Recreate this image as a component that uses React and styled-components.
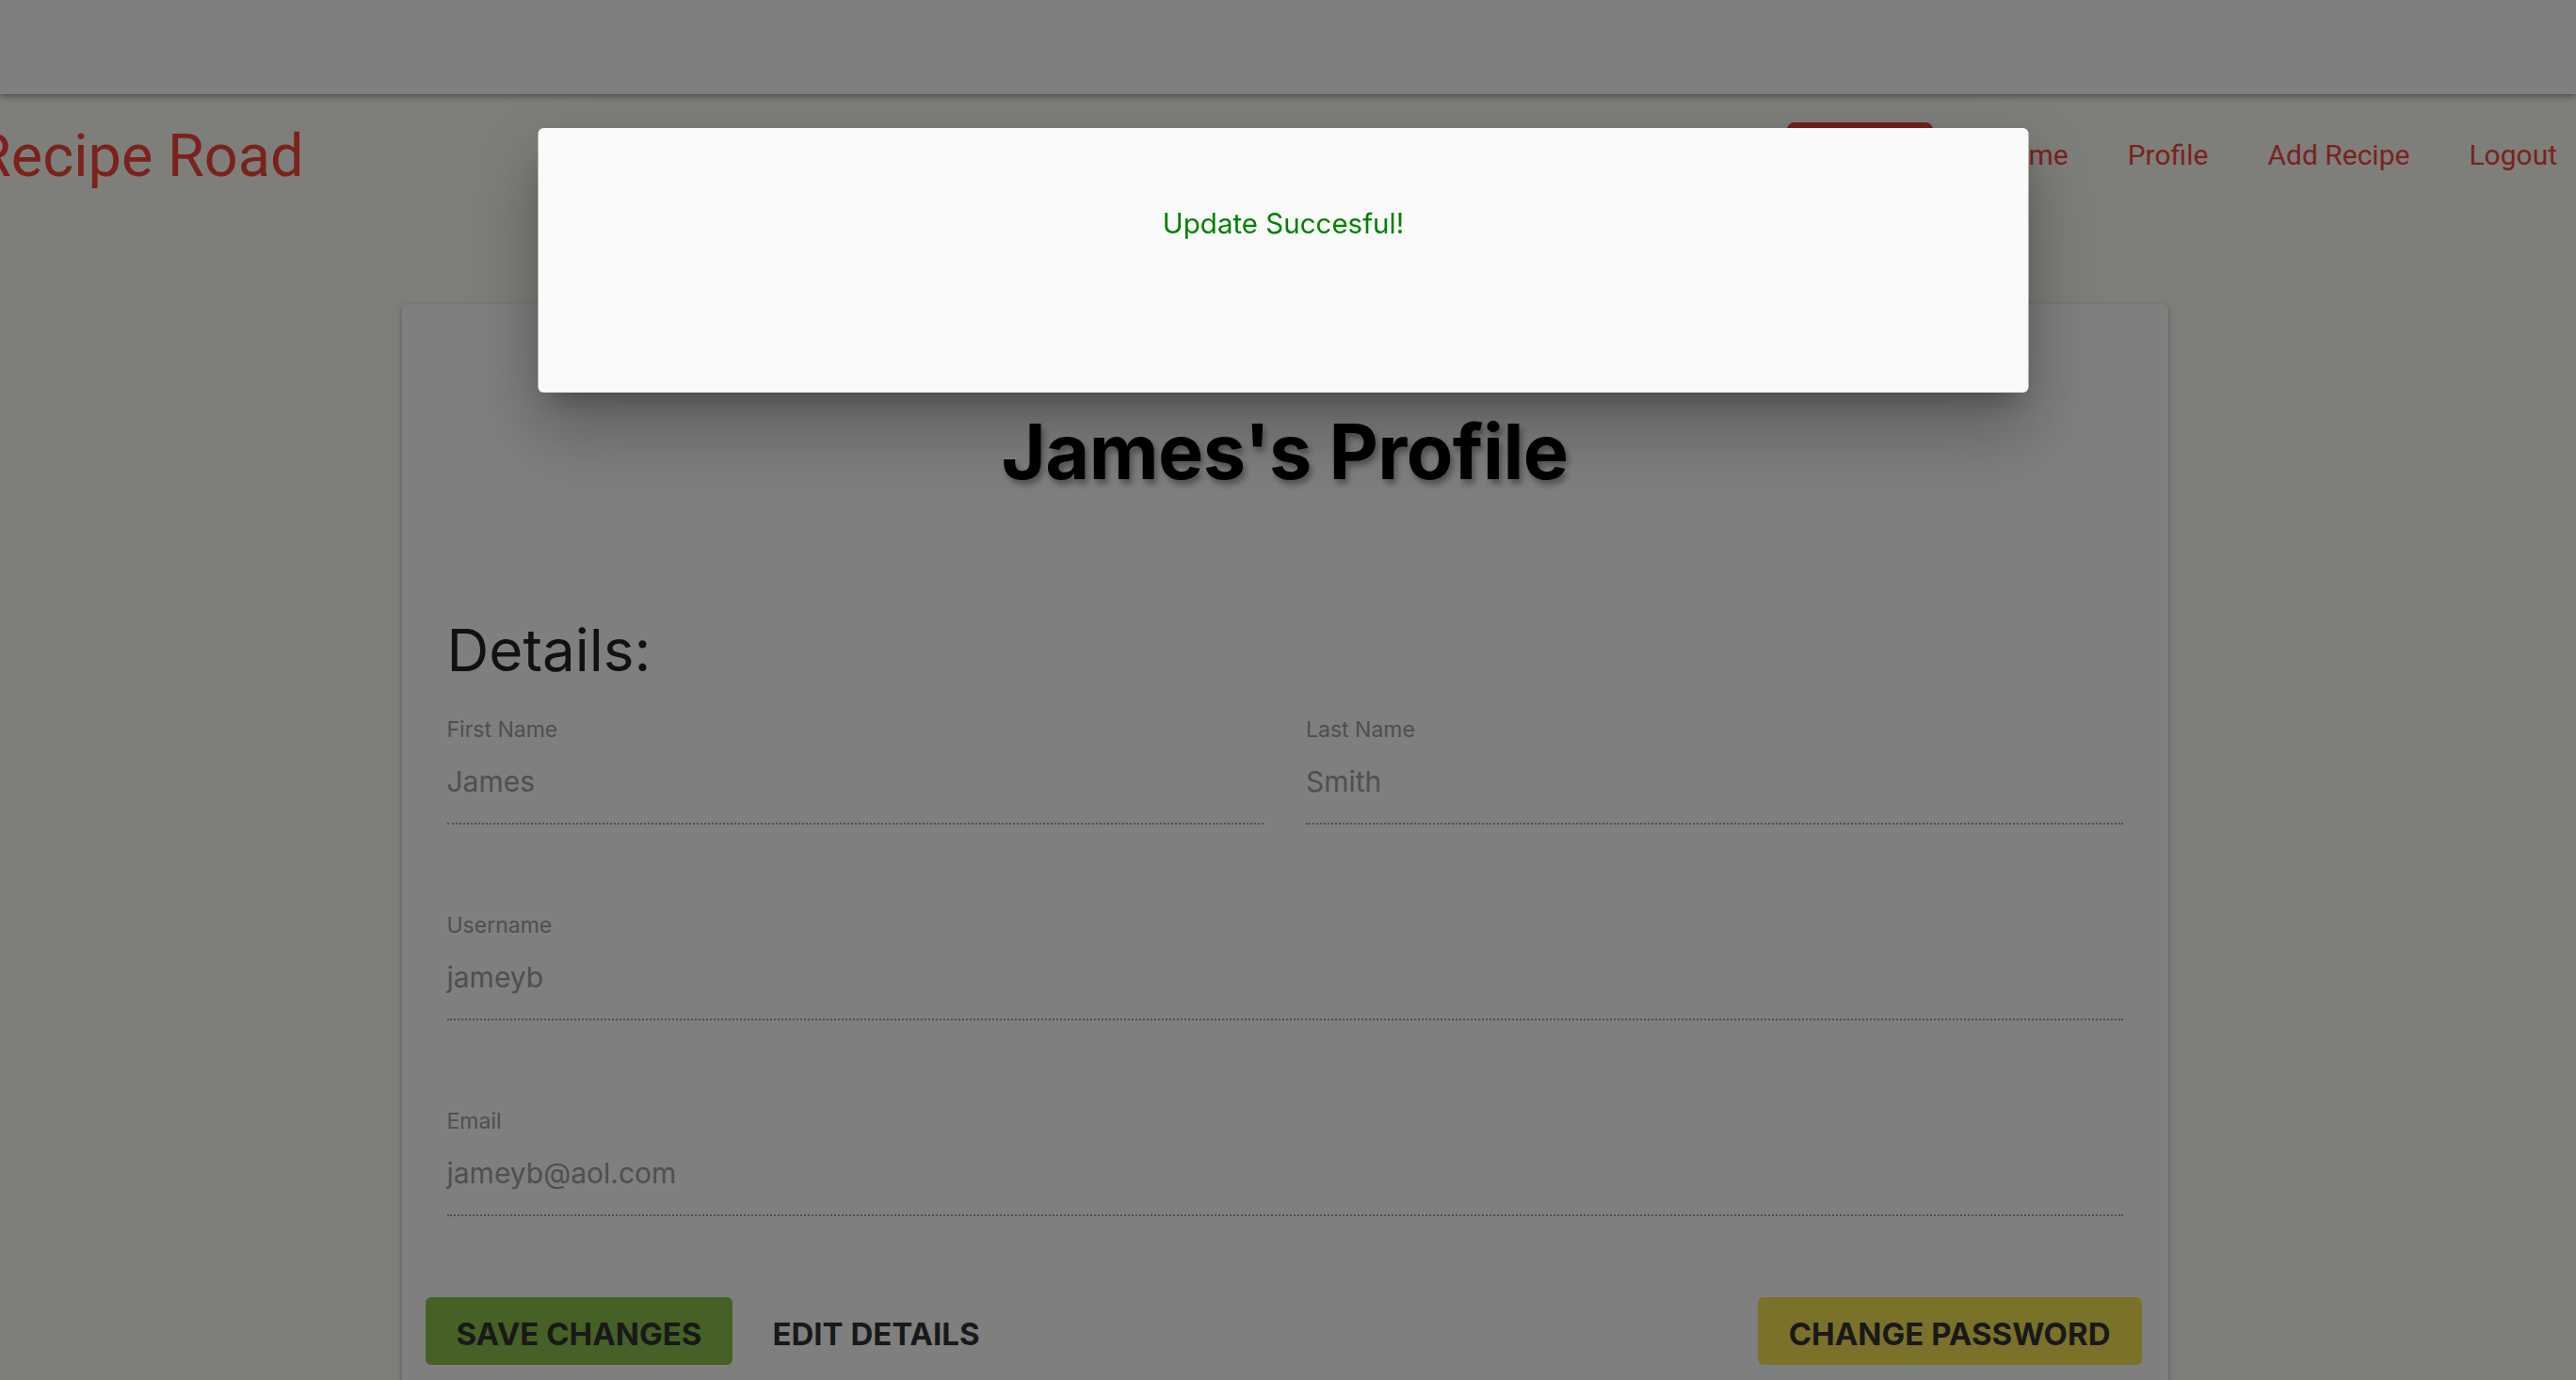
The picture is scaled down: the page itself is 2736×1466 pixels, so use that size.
import React from "react";
import styled, { createGlobalStyle } from "styled-components";

const GlobalStyle = createGlobalStyle`
    html, body {
        margin: 0;
        padding: 0;
        background-color: #fdfef4;
        overflow: hidden;
    }
    * {
        box-sizing: border-box;
    }
`;

const fields = [
    [
        { label: "First Name", value: "James" },
        { label: "Last Name", value: "Smith" },
    ],
    [{ label: "Username", value: "jameyb" }],
    [{ label: "Email", value: "jameyb@aol.com" }],
];

const navLinks = ["Home", "Profile", "Add Recipe", "Logout"];

const Field = ({ label, value }) => (
    <FieldBox>
        <FieldLabel>{label}</FieldLabel>
        <FieldValue>{value}</FieldValue>
    </FieldBox>
);

const App = () => {
    return (
        <>
            <GlobalStyle />
            <Page>
                <TopBar />
                <Header>
                    <Brand>Recipe Road</Brand>
                    <Nav>
                        <SearchPill aria-hidden="true" />
                        {navLinks.map((link) => (
                            <NavLink key={link}>{link}</NavLink>
                        ))}
                    </Nav>
                </Header>

                <Main>
                    <Card>
                        <Title>James's Profile</Title>
                        <Details>
                            <DetailsTitle>Details:</DetailsTitle>
                            {fields.map((row, i) => (
                                <FieldRow key={i}>
                                    {row.map((f) => (
                                        <Field key={f.label} label={f.label} value={f.value} />
                                    ))}
                                </FieldRow>
                            ))}
                        </Details>
                        <Actions>
                            <ButtonGroup>
                                <ActionButton $bg="#8cc24b">SAVE CHANGES</ActionButton>
                                <ActionButton>EDIT DETAILS</ActionButton>
                            </ButtonGroup>
                            <ActionButton $bg="#f6e552">CHANGE PASSWORD</ActionButton>
                        </Actions>
                    </Card>
                </Main>
            </Page>

            <Backdrop />
            <Dialog>
                <Message>Update Succesful!</Message>
            </Dialog>
        </>
    );
};

const Page = styled.div`
    min-height: 1466px;
    display: flex;
    flex-direction: column;
`;

const TopBar = styled.div`
    height: 100px;
    background-color: #fefefe;
    box-shadow: 0 3px 6px rgba(0, 0, 0, 0.35);
    position: relative;
    z-index: 1;
`;

const Header = styled.header`
    height: 130px;
    display: flex;
    flex-direction: row;
    justify-content: space-between;
    align-items: center;
`;

const Brand = styled.h1`
    margin: 0 0 0 -27px;
    font-family: Roboto, "Liberation Sans", sans-serif;
    font-weight: 400;
    font-size: 63px;
    line-height: 1;
    color: #f6453a;
`;

const Nav = styled.nav`
    display: flex;
    flex-direction: row;
    align-items: center;
    gap: 63px;
    padding-right: 20px;
`;

const SearchPill = styled.div`
    width: 155px;
    height: 70px;
    border-radius: 8px;
    background-color: #e4403a;
`;

const NavLink = styled.a`
    font-family: Roboto, "Liberation Sans", sans-serif;
    font-size: 30px;
    line-height: 1;
    color: #f6453a;
    cursor: pointer;
`;

const Main = styled.main`
    display: flex;
    justify-content: center;
    padding-top: 93px;
    padding-right: 7px;
`;

const Card = styled.section`
    width: 1876px;
    background-color: #ffffff;
    border-radius: 6px;
    box-shadow: 0 2px 4px rgba(0, 0, 0, 0.2), 0 2px 10px rgba(0, 0, 0, 0.14);
    padding: 108px 0 80px;
`;

const Title = styled.h1`
    margin: 0;
    text-align: center;
    font-family: Inter, "Liberation Sans", sans-serif;
    font-weight: 700;
    font-size: 81px;
    line-height: 98px;
    letter-spacing: -0.6px;
    color: #000;
    text-shadow: 3px 5px 6px rgba(0, 0, 0, 0.35);
`;

const Details = styled.div`
    padding: 125px 48px 0;
    display: flex;
    flex-direction: column;
    gap: 94px;
`;

const DetailsTitle = styled.h2`
    margin: 0 0 -60px;
    font-family: Inter, "Liberation Sans", sans-serif;
    font-weight: 400;
    font-size: 62px;
    line-height: 74px;
    color: #222;
`;

const FieldRow = styled.div`
    display: flex;
    flex-direction: row;
    gap: 45px;
`;

const FieldBox = styled.div`
    flex: 1;
    display: flex;
    flex-direction: column;
    gap: 24px;
    padding-bottom: 26px;
    border-bottom: 2px dotted #9e9e9e;
`;

const FieldLabel = styled.label`
    font-family: Inter, "Liberation Sans", sans-serif;
    font-size: 23px;
    line-height: 26px;
    color: #9e9e9e;
`;

const FieldValue = styled.div`
    font-family: Inter, "Liberation Sans", sans-serif;
    font-size: 30px;
    line-height: 36px;
    color: #9e9e9e;
`;

const Actions = styled.div`
    margin-top: 86px;
    padding: 0 28px 0 25px;
    display: flex;
    flex-direction: row;
    justify-content: space-between;
    align-items: center;
`;

const ButtonGroup = styled.div`
    display: flex;
    flex-direction: row;
    gap: 9px;
`;

const ActionButton = styled.button`
    height: 72px;
    padding: 6px 33px 0;
    border: none;
    border-radius: 6px;
    background-color: ${(p) => p.$bg || "transparent"};
    font-family: Inter, "Liberation Sans", sans-serif;
    font-weight: 700;
    font-size: 33px;
    color: #333;
    cursor: pointer;
`;

const Backdrop = styled.div`
    position: fixed;
    inset: 0;
    background-color: rgba(0, 0, 0, 0.5);
    z-index: 10;
`;

const Dialog = styled.div`
    position: fixed;
    top: 136px;
    left: 50%;
    transform: translateX(-50%);
    margin-left: -5px;
    width: 1583px;
    height: 281px;
    background-color: #fafafa;
    border-radius: 6px;
    box-shadow: 0 22px 70px 8px rgba(0, 0, 0, 0.12), 0 48px 76px 6px rgba(0, 0, 0, 0.14),
        0 18px 30px -14px rgba(0, 0, 0, 0.3);
    z-index: 11;
    padding-top: 83px;
    display: flex;
    justify-content: center;
    align-items: flex-start;
`;

const Message = styled.p`
    margin: 0;
    font-family: Inter, "Liberation Sans", sans-serif;
    font-size: 29.5px;
    line-height: 36px;
    color: #008000;
`;

export default App;
